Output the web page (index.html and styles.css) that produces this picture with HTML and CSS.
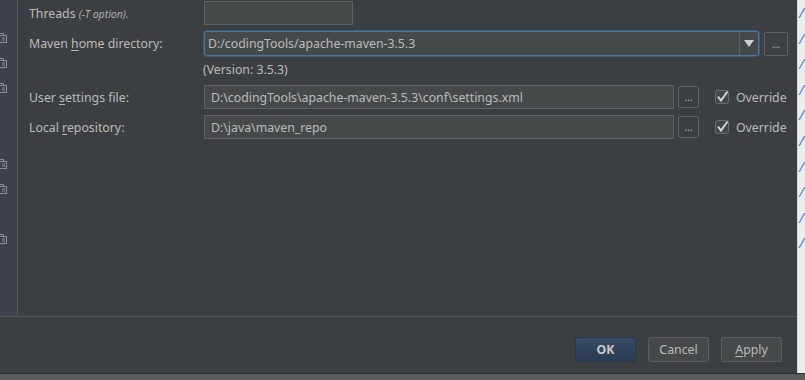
FILE: index.html
```
<!DOCTYPE html>
<html lang="en">
<head>
  <meta charset="UTF-8">
  <title>Maven settings</title>
  <link rel="stylesheet" href="styles.css">
</head>
<body>
  <div class="screen">
    <div class="top">
      <div class="dialog">
        <div class="main">
          <div class="sidebar">
            <div class="nav-item"></div>
            <div class="nav-item"><svg class="mod" width="8" height="10" viewBox="0 0 8 10"><path d="M-3 0.5H3.5V2.5" /><rect x="-4.5" y="2.5" width="11" height="7" /><path d="M2 5H5M2 7H5" /></svg></div>
            <div class="nav-item"><svg class="mod" width="8" height="10" viewBox="0 0 8 10"><path d="M-3 0.5H3.5V2.5" /><rect x="-4.5" y="2.5" width="11" height="7" /><path d="M2 5H5M2 7H5" /></svg></div>
            <div class="nav-item"><svg class="mod" width="8" height="10" viewBox="0 0 8 10"><path d="M-3 0.5H3.5V2.5" /><rect x="-4.5" y="2.5" width="11" height="7" /><path d="M2 5H5M2 7H5" /></svg></div>
            <div class="nav-item"></div>
            <div class="nav-item"></div>
            <div class="nav-item"><svg class="mod" width="8" height="10" viewBox="0 0 8 10"><path d="M-3 0.5H3.5V2.5" /><rect x="-4.5" y="2.5" width="11" height="7" /><path d="M2 5H5M2 7H5" /></svg></div>
            <div class="nav-item"><svg class="mod" width="8" height="10" viewBox="0 0 8 10"><path d="M-3 0.5H3.5V2.5" /><rect x="-4.5" y="2.5" width="11" height="7" /><path d="M2 5H5M2 7H5" /></svg></div>
            <div class="nav-item"></div>
            <div class="nav-item"><svg class="mod" width="8" height="10" viewBox="0 0 8 10"><path d="M-3 0.5H3.5V2.5" /><rect x="-4.5" y="2.5" width="11" height="7" /><path d="M2 5H5M2 7H5" /></svg></div>
          </div>

          <div class="content">
            <div class="row row-threads">
              <span class="label">Threads <i class="hint">(-T option).</i></span>
              <span class="field field-small"></span>
            </div>

            <div class="row row-home">
              <span class="label">Maven <u>h</u>ome directory:</span>
              <div class="combo">
                <span class="combo-value">D:/codingTools/apache-maven-3.5.3</span>
                <span class="combo-arrow"><span class="triangle"></span></span>
              </div>
              <button class="browse browse-home">…</button>
            </div>

            <div class="version">(Version: 3.5.3)</div>

            <div class="row row-settings">
              <span class="label">User <u>s</u>ettings file:</span>
              <span class="field field-path">D:\codingTools\apache-maven-3.5.3\conf\settings.xml</span>
              <button class="browse">…</button>
              <span class="check">
                <svg class="box" width="15" height="15" viewBox="0 0 15 15"><rect x="0.5" y="0.5" width="13" height="13" rx="2" /><path class="tick" d="M3 6.5L6 10.5L12.5 1.5" /></svg>
                Override
              </span>
            </div>

            <div class="row row-local">
              <span class="label">Local <u>r</u>epository:</span>
              <span class="field field-path">D:\java\maven_repo</span>
              <button class="browse">…</button>
              <span class="check">
                <svg class="box" width="15" height="15" viewBox="0 0 15 15"><rect x="0.5" y="0.5" width="13" height="13" rx="2" /><path class="tick" d="M3 6.5L6 10.5L12.5 1.5" /></svg>
                Override
              </span>
            </div>
          </div>
        </div>

        <div class="actions">
          <button class="btn btn-ok">OK</button>
          <button class="btn">Cancel</button>
          <button class="btn"><u>A</u>pply</button>
        </div>
      </div>

      <div class="editor">
        <span>/</span><span>/</span><span>/</span><span>/</span><span>/</span>
        <span>/</span><span>/</span><span>/</span><span>/</span><span>/</span>
      </div>
    </div>
    <div class="status"></div>
  </div>
</body>
</html>
```

FILE: styles.css
```
body {
  margin: 0;
  padding: 0;
  background: #3c3f41;
  font-family: 'Noto Sans', sans-serif;
  font-size: 12.3px;
  color: #bbbbbb;
}
u {
  text-decoration-thickness: 1px;
  text-underline-offset: 2px;
}
.screen {
  width: 805px;
  height: 380px;
  display: flex;
  flex-direction: column;
  overflow: hidden;
}
.top {
  display: flex;
  height: 373px;
  border-bottom: 1px solid #2b2b2b;
}
.dialog {
  width: 797px;
  display: flex;
  flex-direction: column;
  background: #3c3f41;
}
.main {
  display: flex;
  height: 316px;
  border-bottom: 1px solid #555758;
}
.sidebar {
  width: 17px;
  background: #3e434b;
  border-right: 1px solid #53575a;
  display: flex;
  flex-direction: column;
}
.nav-item {
  height: 25.2px;
  display: flex;
  align-items: center;
  flex-shrink: 0;
}
.mod {
  fill: none;
  stroke: #8a8f95;
  stroke-width: 1;
}
.content {
  flex: 1;
  padding-left: 11px;
  display: flex;
  flex-direction: column;
}
.row {
  display: flex;
  align-items: center;
}
.label {
  width: 175px;
  flex-shrink: 0;
  white-space: nowrap;
}
.hint {
  font-size: 10.5px;
  color: #b0b0b0;
}
.row-threads {
  margin-top: 1px;
  height: 24px;
}
.row-home {
  margin-top: 6px;
  height: 25px;
}
.row-settings {
  margin-top: 1px;
  height: 24px;
}
.row-local {
  margin-top: 6px;
  height: 24px;
}
.field {
  box-sizing: border-box;
  height: 24px;
  background: #45494a;
  border: 1px solid #5e6162;
  display: flex;
  align-items: center;
  padding-left: 6px;
  white-space: nowrap;
}
.field-small {
  width: 149px;
}
.field-path {
  width: 470px;
}
.combo {
  box-sizing: border-box;
  width: 555px;
  height: 25px;
  display: flex;
  background: #45494a;
  border: 1px solid #4b74a0;
  border-radius: 3px;
  box-shadow: 0 0 0 1px #3f5770;
}
.combo-value {
  flex: 1;
  display: flex;
  align-items: center;
  padding-left: 3px;
}
.combo-arrow {
  width: 18px;
  border-left: 1px solid #5a6166;
  display: flex;
  align-items: center;
  justify-content: center;
}
.triangle {
  width: 0;
  height: 0;
  border-left: 5px solid transparent;
  border-right: 5px solid transparent;
  border-top: 7px solid #d0d0d0;
}
.browse {
  box-sizing: border-box;
  height: 22px;
  width: 21px;
  margin-left: 4px;
  padding: 0;
  background: #3c3f41;
  border: 1px solid #5e6162;
  border-radius: 2px;
  color: #b8b8b8;
  font-family: 'Noto Sans', sans-serif;
  font-size: 10px;
  line-height: 20px;
}
.browse-home {
  width: 24px;
  height: 24px;
  margin-left: 5px;
}
.version {
  height: 28px;
  line-height: 28px;
  padding-left: 174px;
}
.check {
  display: flex;
  align-items: center;
  margin-left: 16px;
  white-space: nowrap;
}
.box {
  margin-right: 6px;
}
.box rect {
  fill: #43494a;
  stroke: #6b6e70;
}
.tick {
  fill: none;
  stroke: #d2d2d2;
  stroke-width: 2;
}
.actions {
  height: 56px;
  display: flex;
  justify-content: flex-end;
  align-items: flex-start;
  gap: 12px;
  padding: 20px 15px 0 0;
  box-sizing: border-box;
}
.btn {
  box-sizing: border-box;
  width: 61px;
  height: 25px;
  background: #45494a;
  border: 1px solid #5c5f61;
  border-radius: 3px;
  color: #bbbbbb;
  font-family: 'Noto Sans', sans-serif;
  font-size: 12.3px;
  padding: 0;
}
.btn-ok {
  background: linear-gradient(#384c68, #2a3b53);
  border-color: #293849;
  color: #c8c8c8;
  font-weight: bold;
}
.editor {
  flex: 1;
  background: #ececec;
  border-left: 1px solid #d4d4d4;
  display: flex;
  flex-direction: column;
  overflow: hidden;
}
.editor span {
  height: 25.6px;
  line-height: 25.6px;
  flex-shrink: 0;
  padding-left: 1px;
  font-style: italic;
  font-size: 14px;
  color: #4f82cc;
}
.status {
  flex: 1;
  background: #595b5d;
}
```
